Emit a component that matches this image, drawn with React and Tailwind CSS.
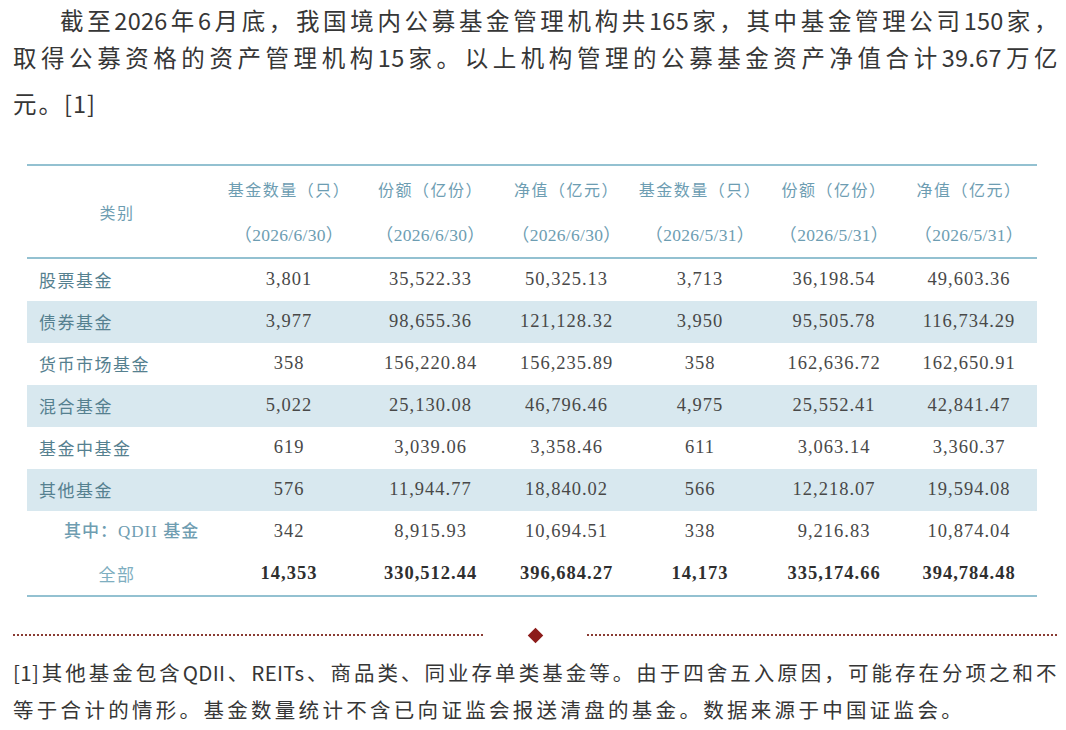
import React from "react";

const heads = [
  ["基金数量（只）", "（2026/6/30）"],
  ["份额（亿份）", "（2026/6/30）"],
  ["净值（亿元）", "（2026/6/30）"],
  ["基金数量（只）", "（2026/5/31）"],
  ["份额（亿份）", "（2026/5/31）"],
  ["净值（亿元）", "（2026/5/31）"],
];

const rows = [
  ["股票基金", "3,801", "35,522.33", "50,325.13", "3,713", "36,198.54", "49,603.36"],
  ["债券基金", "3,977", "98,655.36", "121,128.32", "3,950", "95,505.78", "116,734.29"],
  ["货币市场基金", "358", "156,220.84", "156,235.89", "358", "162,636.72", "162,650.91"],
  ["混合基金", "5,022", "25,130.08", "46,796.46", "4,975", "25,552.41", "42,841.47"],
  ["基金中基金", "619", "3,039.06", "3,358.46", "611", "3,063.14", "3,360.37"],
  ["其他基金", "576", "11,944.77", "18,840.02", "566", "12,218.07", "19,594.08"],
  ["其中：QDII 基金", "342", "8,915.93", "10,694.51", "338", "9,216.83", "10,874.04"],
  ["全部", "14,353", "330,512.44", "396,684.27", "14,173", "335,174.66", "394,784.48"],
];

const cols = "grid grid-cols-[190px_144px_139px_133px_134px_134px_136px]";

// latin runs kept as one box so justify doesn't spread the digits
const N = ({ children }) => (
  <span className="inline-block indent-0 tracking-[0.3px]">{children}</span>
);

function Label({ text, i }) {
  if (i === 7) {
    return (
      <div className="text-center pr-[10px] text-[17px] tracking-[1.5px] text-[#7eaec0]">
        {text}
      </div>
    );
  }
  if (i === 6) {
    return (
      <div className="pl-[37px] text-[17px] tracking-[1px] font-medium text-[#6f9db1] font-['Liberation_Serif','Noto_Sans_CJK_SC',serif]">
        {text}
      </div>
    );
  }
  return (
    <div className="pl-[12px] text-[17px] tracking-[1.5px] text-[#55808f]">{text}</div>
  );
}

export default function App() {
  return (
    <div className="w-[1066px] h-[730px] overflow-hidden bg-white font-['Noto_Sans_CJK_SC','Noto_Sans',sans-serif]">
      <div className="pl-[13px] pr-[8px] pt-[2px] text-[23.5px] leading-[37px] text-[#363636]">
        <div className="text-justify [text-align-last:justify] indent-[2em] tracking-[0.5px]">
          截至<N>2026</N>年<N>6</N>月底，我国境内公募基金管理机构共<N>165</N>家，其中基金管理公司<N>150</N>家，
        </div>
        <div className="text-justify [text-align-last:justify] tracking-[0.5px]">
          取得公募资格的资产管理机构<N>15</N>家。以上机构管理的公募基金资产净值合计<N>39.67</N>万亿
        </div>
        <div className="mt-[9px] tracking-[2px]">
          元。<span className="inline-block tracking-[1px]">[1]</span>
        </div>
      </div>

      <div className="ml-[27px] mt-[42px] w-[1010px] border-t-2 border-b-2 border-[#93c1d1]">
        <div className={`${cols} h-[93px] border-b-2 border-[#93c1d1] text-[#6d9db2]`}>
          <div className="flex items-center justify-center pr-[10px] text-[16px] tracking-[1.5px]">类别</div>
          {heads.map((h, k) => (
            <div key={k} className="flex flex-col items-center justify-center gap-[22px] leading-[24px]">
              <div className="text-[16px] tracking-[1.5px]">{h[0]}</div>
              <div className="text-[17.5px] tracking-[0.3px] font-['Liberation_Serif','Noto_Sans_CJK_SC',serif]">{h[1]}</div>
            </div>
          ))}
        </div>
        {rows.map((r, i) => (
          <div
            key={i}
            className={`${cols} h-[42px] items-center ${i % 2 === 1 && i < 6 ? "bg-[#d8e8ef]" : ""}`}
          >
            <Label text={r[0]} i={i} />
            {r.slice(1).map((v, k) => (
              <div
                key={k}
                className={`text-center text-[18.5px] tracking-[1px] font-['Liberation_Serif',serif] ${
                  i === 7 ? "font-bold text-[#2f2f2f]" : "text-[#484848]"
                }`}
              >
                {v}
              </div>
            ))}
          </div>
        ))}
      </div>

      <div className="mt-[30px] h-[16px] pl-[13px] pr-[9px] flex items-center">
        <div className="flex-1 border-t-2 border-dotted border-[#8a3b33]"></div>
        <div className="w-[104px] flex justify-center">
          <div className="w-[11px] h-[11px] rotate-45 bg-[#8c1c1a]"></div>
        </div>
        <div className="flex-1 border-t-2 border-dotted border-[#8a3b33]"></div>
      </div>

      <div className="mt-[11px] pl-[13px] pr-[9px] text-[20.5px] leading-[37px] text-[#363636]">
        <div className="text-justify [text-align-last:justify] tracking-[0.5px]">
          <N>[1]</N>其他基金包含<N>QDII</N>、<N>REITs</N>、商品类、同业存单类基金等。由于四舍五入原因，可能存在分项之和不
        </div>
        <div className="tracking-[3.3px]">
          等于合计的情形。基金数量统计不含已向证监会报送清盘的基金。数据来源于中国证监会。
        </div>
      </div>
    </div>
  );
}
